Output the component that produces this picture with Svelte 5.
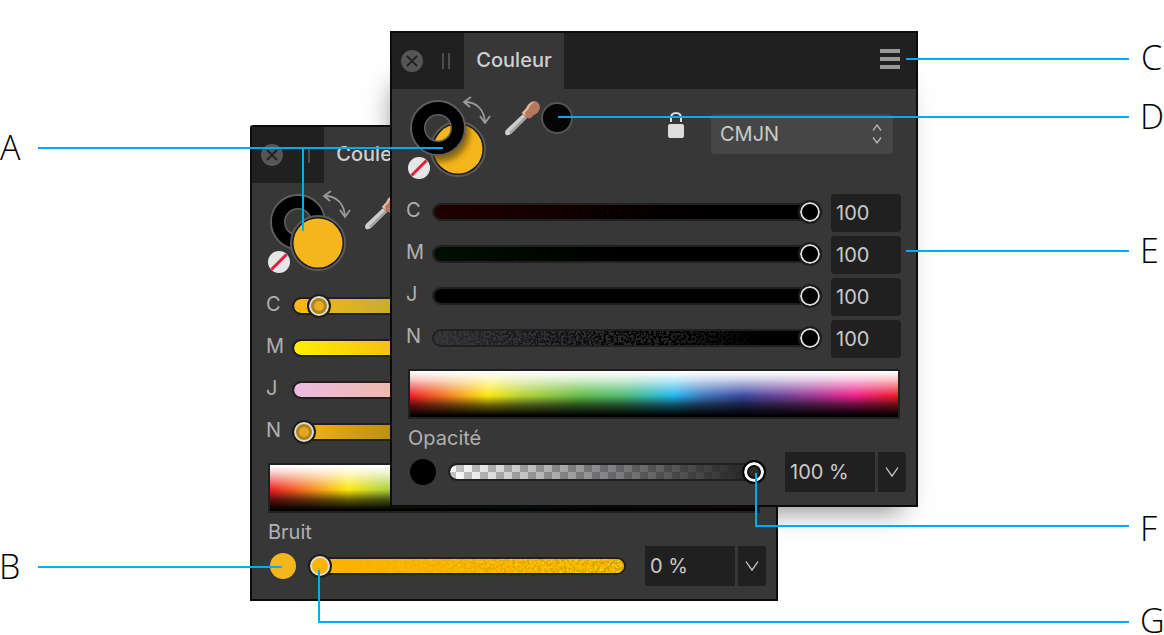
<script>
	let panels = $state([
		{
			id: 'back',
			fillOnTop: true,
			channels: [
				{ name: 'C', value: 4, track: '#fcb711, #c4ad32 26%, #00803c', ring: '#b1841a', fill: '#e9ae1f' },
				{ name: 'M', value: 28, track: '#feee00, #f4bf14 26%, #e8202a', ring: '#b1841a', fill: '#f4b61a' },
				{ name: 'J', value: 90, track: '#ecbbe2, #f1b9ab 26%, #f9b500', ring: '#b1841a', fill: '#f4b61a' },
				{ name: 'N', value: 0, track: '#fcb711, #b98d15 26%, #000', ring: '#b1841a', fill: '#e3a81f' }
			],
			extra: { label: 'Bruit', kind: 'noise', value: 0, swatch: '#f4b61a' }
		},
		{
			id: 'front',
			fillOnTop: false,
			channels: [
				{ name: 'C', value: 100, track: '#240000, #1c0000 30%, #0c0000 55%, #000 75%', speckle: true, ring: '#000', fill: '#000' },
				{ name: 'M', value: 100, track: '#001003, #000a01 25%, #000 50%', speckle: true, ring: '#000', fill: '#000' },
				{ name: 'J', value: 100, track: '#000, #000', ring: '#000', fill: '#000' },
				{ name: 'N', value: 100, track: '#38373a, #302f33 30%, #262427 60%, #000 85%', speckle: true, ring: '#000', fill: '#000' }
			],
			extra: { label: 'Opacité', kind: 'opacity', value: 100, swatch: '#000' }
		}
	])

	const callouts = [
		{ letter: 'A', x: 0, y: 160, line: 'M38 148H443M303 148V231' },
		{ letter: 'B', x: -1, y: 579, line: 'M38 567H282' },
		{ letter: 'C', x: 1141, y: 70, line: 'M906 59H1129' },
		{ letter: 'D', x: 1140, y: 129, line: 'M558 117H1129' },
		{ letter: 'E', x: 1140, y: 263, line: 'M906 251H1129' },
		{ letter: 'F', x: 1140, y: 541, line: 'M756 473V526H1129' },
		{ letter: 'G', x: 1140, y: 633, line: 'M319 570V622H1129' }
	]
</script>

{#snippet stroke()}
	<g>
		<circle cx="32" cy="32" r="27" fill="none" stroke="#5f5f5f" stroke-width="2" />
		<circle cx="32" cy="32" r="13.500" fill="none" stroke="#5f5f5f" stroke-width="2" />
		<circle cx="32" cy="32" r="20" fill="none" stroke="#000" stroke-width="12" />
	</g>
{/snippet}

{#snippet fill()}
	<g>
		<circle cx="52" cy="53" r="27" fill="#1c1c1c" stroke="#5a5a5a" stroke-width="2" />
		<circle cx="52" cy="53" r="24.500" fill="#f4b61a" />
	</g>
{/snippet}

<div class="canvas">
	<div class="shadow"></div>

	{#each panels as panel (panel.id)}
		<section class="panel {panel.id}">
			<header>
				<button class="close" aria-label="Fermer">
					<svg width="22" height="22" viewBox="0 0 22 22">
						<circle cx="11" cy="11" r="11" fill="#555" />
						<path d="M6 6L16 16M16 6L6 16" stroke="#202020" stroke-width="1.800" />
					</svg>
				</button>
				<span class="grip"></span>
				<button class="tab">Couleur</button>
				<button class="menu" aria-label="Menu"><i></i><i></i><i></i></button>
			</header>

			<div class="tools">
				<svg class="swatches" width="86" height="86" viewBox="0 0 86 86">
					{#if panel.fillOnTop}
						{@render stroke()}
						{@render fill()}
					{:else}
						{@render fill()}
						<clipPath id="fill-clip"><circle cx="52" cy="53" r="24.500" /></clipPath>
						<circle cx="34" cy="36" r="24" fill="none" stroke="#5d450c" stroke-opacity=".75" stroke-width="11" filter="url(#soft)" clip-path="url(#fill-clip)" />
						{@render stroke()}
					{/if}
					<path d="M59 6C71 6 78 14 79 26M65 1L58 6L64 11M74 20L79 27L84 20" fill="none" stroke="#9a9a9a" stroke-width="1.800" />
					<circle cx="13" cy="72" r="11" fill="#e6e6e6" />
					<path d="M5.500 79.500L20.500 64.500" stroke="#e0203c" stroke-width="3" />
				</svg>
				<button class="dropper" aria-label="Pipette">
					<svg width="36" height="36" viewBox="0 0 36 36">
						<path d="M19 14L23 18L8 33Q5 36 2 35Q0 33 2 30Z" fill="#cdcdcd" />
						<path d="M22 17L6 33" stroke="#9f9f9f" stroke-width="2" />
						<path d="M17.500 13L22 8Q25 1 31 1Q35 2 36 7Q36 12 30 15L26 18.500L23.500 18Z" fill="#b57959" />
						<path d="M18 13L22.500 8Q25 2 31 1.500Q26 4 24.500 9L21 12.500L22 16Z" fill="#e5bda6" />
					</svg>
				</button>
				<span class="picked"></span>
				<div class="mode">
					<button class="lock" aria-label="Verrouiller">
						<svg width="18" height="44" viewBox="0 0 18 44">
							<path d="M4 10V6Q4 1 9 1Q14 1 14 6V10" fill="none" stroke="#dcdcdc" stroke-width="2" />
							<rect x="1" y="12" width="16" height="14" rx="2" fill="#dcdcdc" />
						</svg>
					</button>
					<div class="select">
						<select aria-label="Modèle de couleur">
							<option>CMJN</option>
							<option>RVB</option>
							<option>TSL</option>
						</select>
						<svg width="10" height="22" viewBox="0 0 10 22">
							<path d="M1 7.500L5 2L9 7.500M1 14.500L5 20L9 14.500" fill="none" stroke="#b8b8b8" stroke-width="1.300" />
						</svg>
					</div>
				</div>
			</div>

			<div class="channels">
				{#each panel.channels as channel (channel.name)}
					<div class="channel">
						<label for="{panel.id}-{channel.name}">{channel.name}</label>
						<div class="slider" style="--track: {channel.track}; --ring: {channel.ring}; --fill: {channel.fill}">
							<div class="track">
								{#if channel.speckle}
									<svg class="speckle"><rect width="100%" height="100%" filter="url(#dark-noise)" /></svg>
								{/if}
							</div>
							<input id="{panel.id}-{channel.name}" type="range" min="0" max="100" bind:value={channel.value} />
						</div>
						<input class="field" aria-label="{channel.name} valeur" bind:value={channel.value} />
					</div>
				{/each}
			</div>

			<div class="spectrum"></div>

			<label class="extra-label" for="{panel.id}-extra">{panel.extra.label}</label>
			<div class="extra">
				<span class="dot" style="background: {panel.extra.swatch}"></span>
				<div class="slider {panel.extra.kind}">
					<div class="track">
						{#if panel.extra.kind === 'noise'}
							<svg class="grain">
								<rect width="100%" height="100%" filter="url(#dark-grain)" />
								<rect width="100%" height="100%" filter="url(#light-grain)" />
							</svg>
						{/if}
					</div>
					<input id="{panel.id}-extra" type="range" min="0" max="100" bind:value={panel.extra.value} />
				</div>
				<div class="combo">
					<input
						class="field"
						aria-label="{panel.extra.label} valeur"
						value="{panel.extra.value} %"
						onchange={(e) => (panel.extra.value = parseInt(e.currentTarget.value) || 0)}
					/>
					<button aria-label="Ouvrir">
						<svg width="14" height="12" viewBox="0 0 14 12">
							<path d="M1 1.500L7 10L13 1.500" fill="none" stroke="#cfcfcf" stroke-width="1.300" />
						</svg>
					</button>
				</div>
			</div>
		</section>
	{/each}

	<svg class="callouts">
		<defs>
			<filter id="soft" x="-30%" y="-30%" width="160%" height="160%"><feGaussianBlur stdDeviation="3" /></filter>
			<filter id="dark-noise" x="0" y="0" width="100%" height="100%">
				<feTurbulence type="fractalNoise" baseFrequency=".4" numOctaves="2" seed="4" />
				<feColorMatrix values="0 0 0 0 0  0 0 0 0 0  0 0 0 0 0  9 0 0 0 -4" />
			</filter>
			<filter id="dark-grain" x="0" y="0" width="100%" height="100%">
				<feTurbulence type="fractalNoise" baseFrequency=".35" numOctaves="2" seed="9" />
				<feColorMatrix values="0 0 0 0 .6  0 0 0 0 .36  0 0 0 0 0  7 0 0 0 -3.200" />
			</filter>
			<filter id="light-grain" x="0" y="0" width="100%" height="100%">
				<feTurbulence type="fractalNoise" baseFrequency=".4" numOctaves="2" seed="21" />
				<feColorMatrix values="0 0 0 0 1  0 0 0 0 .75  0 0 0 0 0  5 0 0 0 -2.700" />
			</filter>
		</defs>
		{#each callouts as callout (callout.letter)}
			<path d={callout.line} />
			<text x={callout.x} y={callout.y}>{callout.letter}</text>
		{/each}
	</svg>
</div>

<style>

:global(body) {
	background: #fff;
}

.canvas {
	position: relative;
	min-height: 635px;
	overflow: hidden;
	font-family: Inter, "Liberation Sans", sans-serif;
	font-size: 20px;
	line-height: 24px;
	color: #b0b0b0;
}

button, input, select {
	font: inherit;
	color: inherit;
	margin: 0;
	padding: 0;
	border: 0;
	background: none;
	min-width: 0;
}

button {
	display: flex;
	align-items: center;
	justify-content: center;
	cursor: pointer;
}

svg {
	display: block;
	flex: none;
}

.shadow {
	position: absolute;
	left: 396px;
	top: 80px;
	width: 504px;
	height: 420px;
	box-shadow: 0 8px 26px 2px rgba(0, 0, 0, 0.5);
}

.panel {
	position: absolute;
	box-sizing: border-box;
	width: 528px;
	border: 2px solid #0b0b0b;
	background: #373737;
}

.back {
	left: 250px;
	top: 125px;
	border-radius: 3px 0 0 0;
}

.front {
	left: 390px;
	top: 31px;
}

header {
	display: flex;
	align-items: center;
	height: 56px;
	padding: 0 16px 0 9px;
	background: #202020;
}

.grip {
	box-sizing: border-box;
	width: 8px;
	height: 16px;
	margin: 0 14px 0 19px;
	border: solid #4c4c4c;
	border-width: 0 2px;
}

.tab {
	align-self: stretch;
	width: 100px;
	padding-bottom: 2px;
	background: #373737;
	color: #d0d0d0;
	font-weight: 500;
}

.menu {
	flex-direction: column;
	gap: 4px;
	margin-left: auto;
	margin-bottom: 4px;
}

.menu i {
	width: 20px;
	height: 4px;
	background: #999;
}

.tools {
	display: flex;
	align-items: flex-start;
	height: 98px;
	padding: 7px 23px 0 14px;
}

.dropper {
	margin: 4px 0 0 12px;
}

.picked {
	box-sizing: border-box;
	width: 32px;
	height: 32px;
	margin: 6px 0 0 1px;
	border: 2px solid #555;
	border-radius: 50%;
	background: #050505;
}

.mode {
	display: flex;
	align-items: center;
	gap: 26px;
	margin: 16px 0 0 auto;
}

.select {
	display: grid;
	align-items: center;
	width: 182px;
}

.select > * {
	grid-area: 1 / 1;
}

.select svg {
	justify-self: end;
	margin-right: 11px;
	pointer-events: none;
}

select {
	appearance: none;
	height: 40px;
	padding: 0 9px;
	border-radius: 4px;
	background: #464646;
	color: #cacaca;
}

.channels {
	display: grid;
	gap: 4px;
	padding: 0 15px 0 14px;
}

.channel {
	display: grid;
	grid-template-columns: 26px 1fr 79px;
	align-items: center;
	height: 38px;
}

.channel label {
	padding-bottom: 6px;
}

.channel .slider {
	padding-bottom: 2px;
}

.channel .field {
	justify-self: end;
	width: 70px;
	height: 38px;
	border-radius: 4px;
}

.field {
	box-sizing: border-box;
	padding: 0 5px;
	background: #202020;
	color: #cacaca;
}

.slider {
	display: grid;
	align-items: center;
	isolation: isolate;
}

.slider > * {
	grid-area: 1 / 1;
}

.track {
	box-sizing: border-box;
	height: 18px;
	border: 2px solid #202020;
	border-radius: 9px;
	overflow: hidden;
	background: linear-gradient(90deg, var(--track)) padding-box;
}

.track svg {
	width: 100%;
	height: 100%;
}

.speckle {
	mask-image: linear-gradient(90deg, rgba(0, 0, 0, 0.15), #000 60%);
}

.grain {
	mask-image: linear-gradient(90deg, transparent 5%, #000);
}

.slider input {
	appearance: none;
	width: 100%;
	height: 24px;
	z-index: 1;
}

.slider input::-webkit-slider-thumb {
	appearance: none;
	box-sizing: border-box;
	width: 24px;
	height: 24px;
	border: 2px solid #1e1e1e;
	border-radius: 50%;
	background: var(--fill);
	box-shadow: inset 0 0 0 2px #dedede, inset 0 0 0 5px var(--ring);
}

.noise .track {
	background: #fdb400;
}

.noise input::-webkit-slider-thumb {
	background: #fdb400;
	box-shadow: inset 0 0 0 2px #dedede;
}

.opacity .track {
	background:
		linear-gradient(90deg, transparent, rgba(30, 28, 32, 0.55) 50%, #1d1d1d) padding-box,
		repeating-conic-gradient(#fff 0 25%, #c4c4c4 0 50%) 6px 0 / 16px 14px padding-box;
}

.opacity input::-webkit-slider-thumb {
	border-color: #060606;
	background: #2c2c2c;
	box-shadow: inset 0 0 0 3px #fff, inset 0 0 0 5px #111;
}

.spectrum {
	height: 46px;
	margin: 11px 16px 0;
	border: 2px solid #202020;
	background:
		linear-gradient(#fff 2%, rgba(255, 255, 255, 0.75) 18%, transparent 54%, rgba(0, 0, 0, 0.6) 75%, #000 97%) padding-box,
		linear-gradient(90deg, #ed1c24, #f58220 8%, #fbe80a 16%, #b4d136 23%, #62bb46 35%, #4dba74 44%, #1fb6ee 54%, #3f77bd 60%, #3949a3 68%, #8a3f98 80%, #ec1f8c 91%, #ed1c24) padding-box;
}

.extra-label {
	display: block;
	padding: 7px 16px 2px;
}

.extra {
	display: grid;
	grid-template-columns: 26px 1fr auto;
	align-items: center;
	column-gap: 12px;
	padding: 0 10px 13px 18px;
}

.dot {
	width: 26px;
	height: 26px;
	border-radius: 50%;
}

.combo {
	display: flex;
	gap: 3px;
	margin-left: 7px;
}

.combo .field {
	width: 90px;
	height: 40px;
}

.combo button {
	width: 28px;
	border-radius: 0 3px 3px 0;
	background: #202020;
}

.callouts {
	position: absolute;
	inset: 0;
	width: 100%;
	height: 100%;
	pointer-events: none;
}

.callouts path {
	fill: none;
	stroke: #00aeef;
	stroke-width: 2px;
}

.callouts text {
	font-family: "Open Sans", sans-serif;
	font-size: 34px;
	font-weight: 300;
	fill: #000;
}

</style>
